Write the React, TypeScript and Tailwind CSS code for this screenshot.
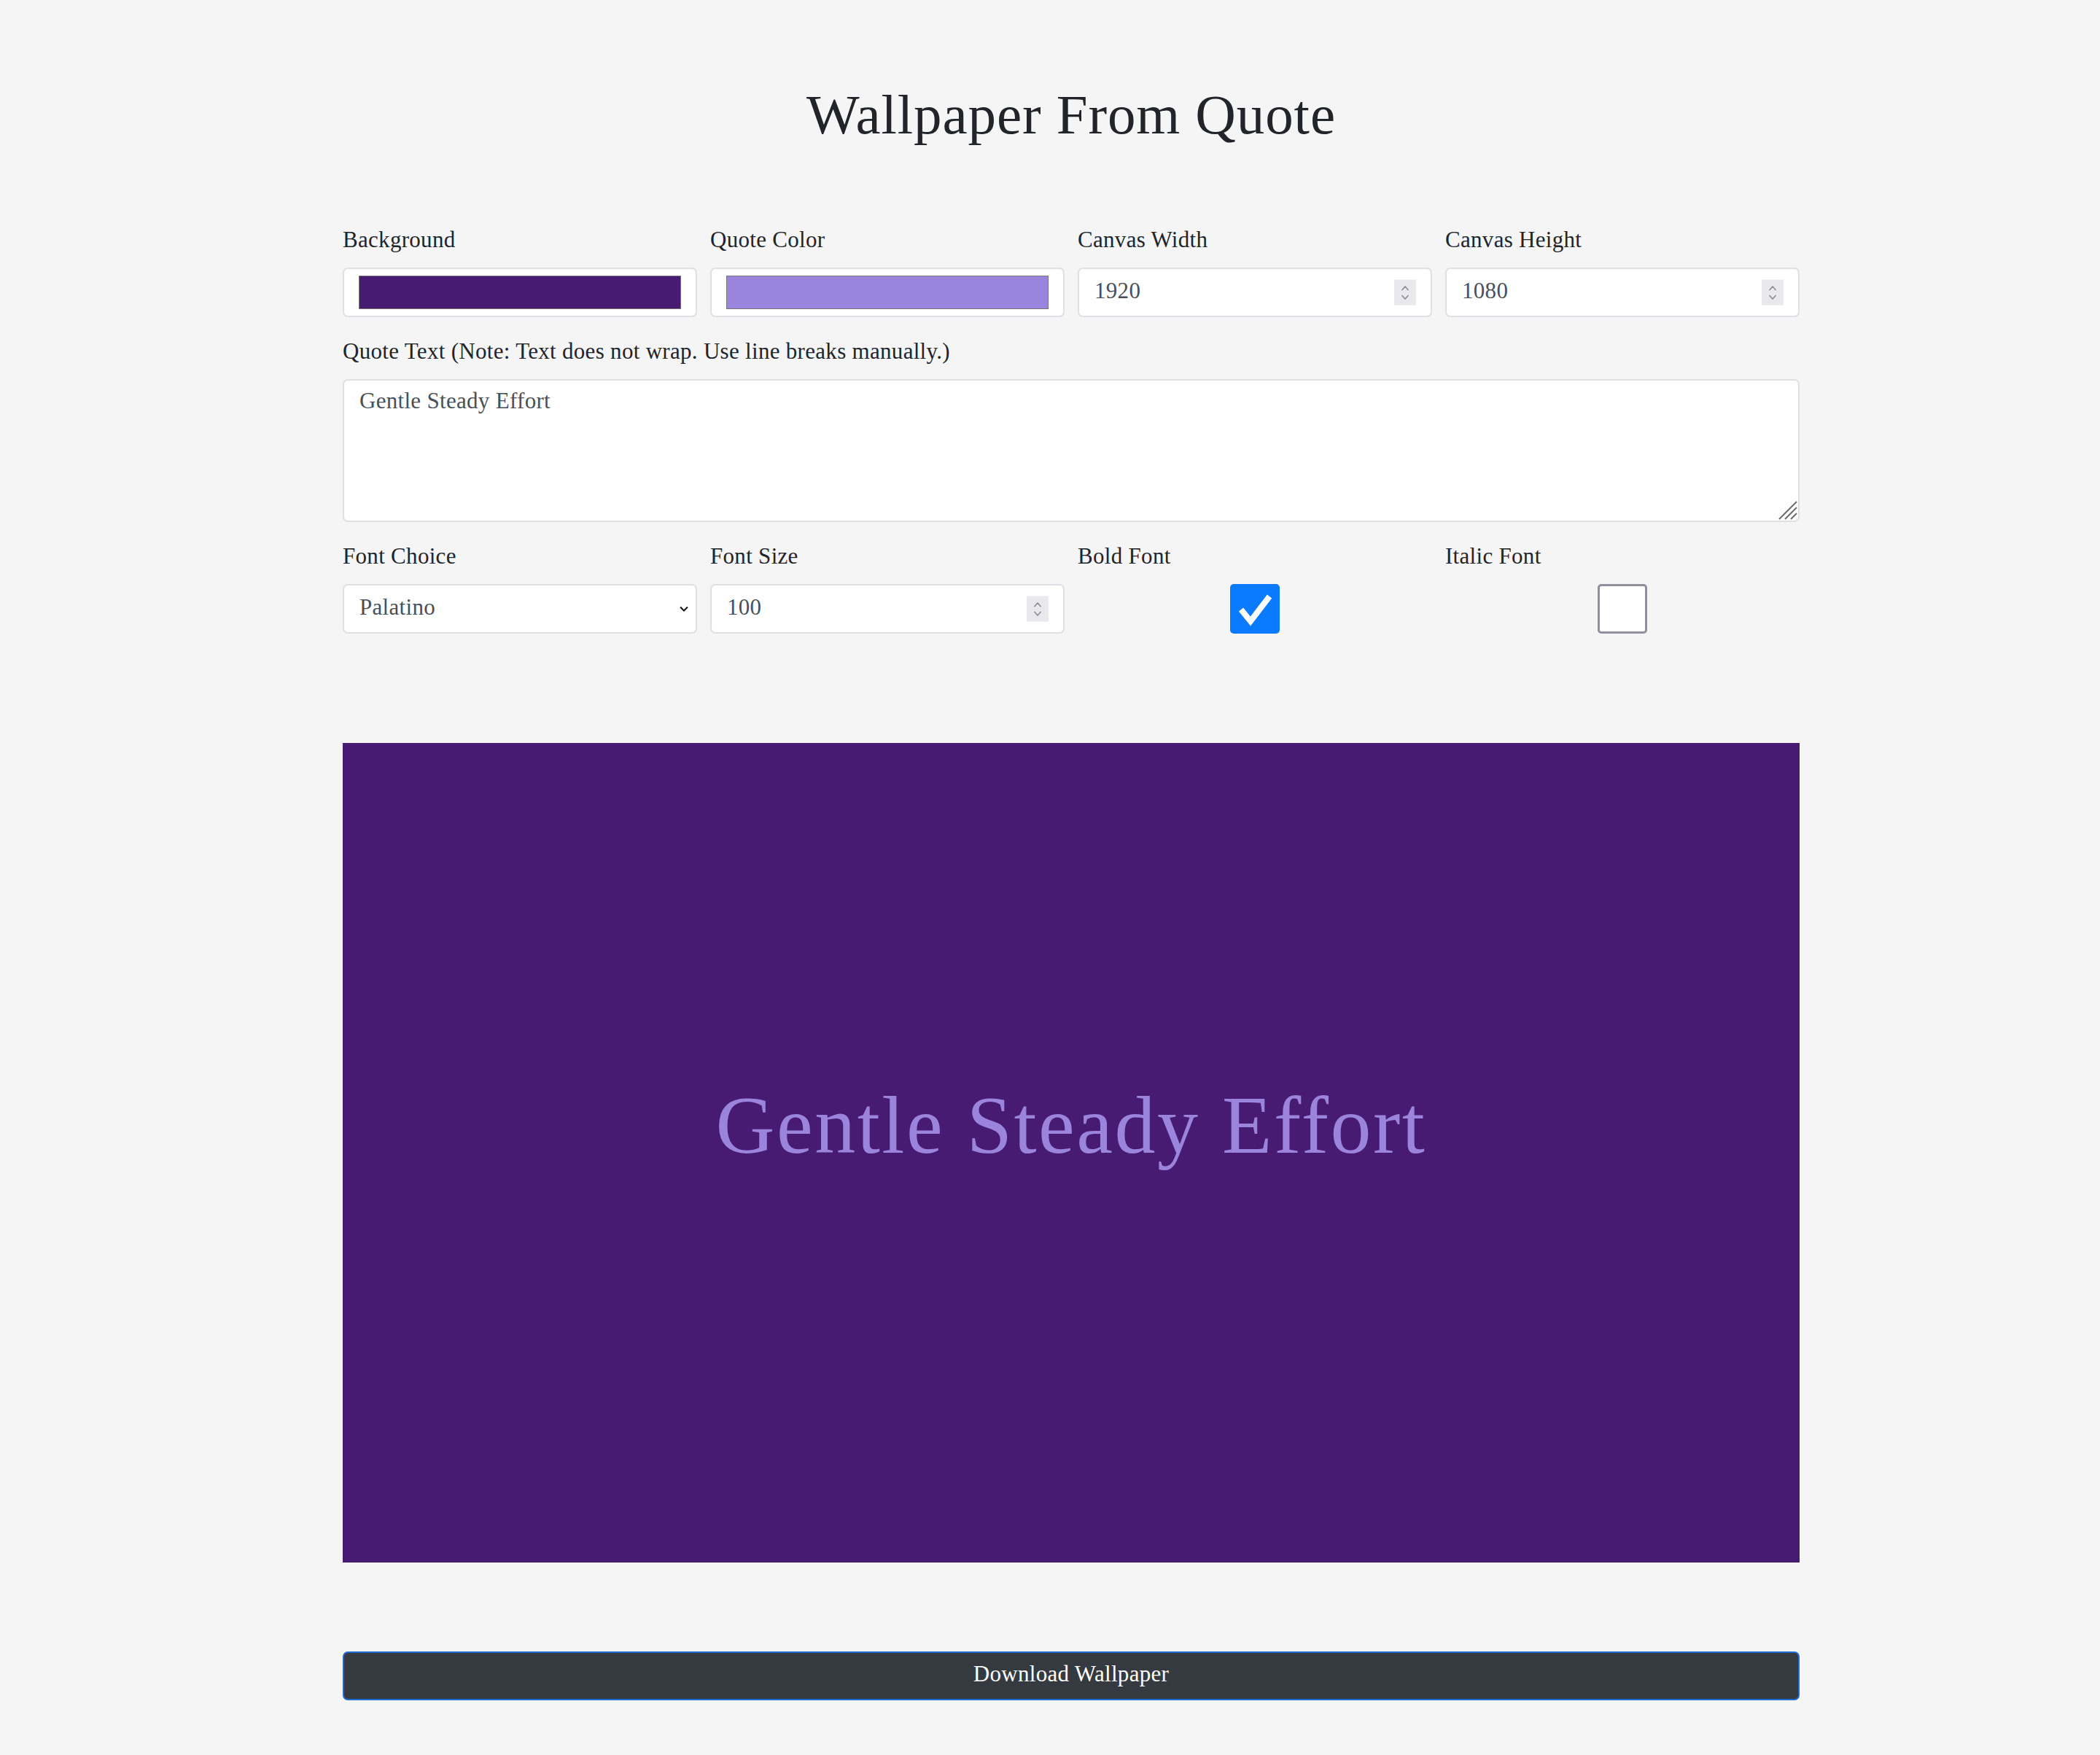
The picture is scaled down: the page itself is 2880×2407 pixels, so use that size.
import React from "react";

const labelCls =
  "block h-[43px] leading-[43px] mb-[17px] text-[31px] tracking-[0.3px] text-[#212529] whitespace-nowrap";
const boxCls =
  "h-[68px] w-full rounded-[7px] border-2 border-[#dde0e5] bg-white";
const inputText =
  "text-[31px] tracking-[0.3px] text-[#495057] font-['Liberation_Serif',serif]";

function Spinner() {
  return (
    <div className="pointer-events-none absolute right-[22px] top-1/2 flex h-[35px] w-[30px] -translate-y-1/2 items-center justify-center bg-[#e9e9ed]">
      <svg width="14" height="26" viewBox="0 0 14 26" fill="none" stroke="#8f8f9d" strokeWidth="1.8" strokeLinecap="round" strokeLinejoin="round">
        <path d="M3 9 L7 4.5 L11 9" />
        <path d="M3 17 L7 21.5 L11 17" />
      </svg>
    </div>
  );
}

function NumberField({ value }: { value: string }) {
  return (
    <div className="relative">
      <input
        type="text"
        readOnly
        value={value}
        className={`${boxCls} ${inputText} px-[21px] pb-[4px] outline-none`}
      />
      <Spinner />
    </div>
  );
}

function ColorField({ color }: { color: string }) {
  return (
    <div className={`${boxCls} flex items-center px-[20px]`}>
      <div className="h-[46px] w-full border border-[#767676]" style={{ backgroundColor: color }} />
    </div>
  );
}

export default function App() {
  return (
    <div className="min-h-screen bg-[#f5f5f5] pb-[75px] pl-[470px] font-['Liberation_Serif',serif]">
      <div className="w-[1998px]">
        <h1 className="pt-[114px] h-[201px] text-center text-[77px] leading-[86px] tracking-[0.9px] text-[#212529]">
          Wallpaper From Quote
        </h1>

        <div className="mt-[106px] grid grid-cols-4 gap-x-[18px]">
          <div>
            <label className={labelCls}>Background</label>
            <ColorField color="#481b73" />
          </div>
          <div>
            <label className={labelCls}>Quote Color</label>
            <ColorField color="#9b84dc" />
          </div>
          <div>
            <label className={labelCls}>Canvas Width</label>
            <NumberField value="1920" />
          </div>
          <div>
            <label className={labelCls}>Canvas Height</label>
            <NumberField value="1080" />
          </div>
        </div>

        <div className="mt-[25px]">
          <label className={labelCls}>Quote Text (Note: Text does not wrap. Use line breaks manually.)</label>
          <div className="relative">
            <textarea
              readOnly
              value="Gentle Steady Effort"
              className={`block h-[196px] w-full resize-none rounded-[7px] border-2 border-[#dde0e5] bg-white px-[21px] pt-[6px] pb-[9px] leading-[43px] outline-none ${inputText}`}
            />
            <svg
              className="pointer-events-none absolute bottom-[3px] right-[3px]"
              width="26"
              height="26"
              viewBox="0 0 26 26"
              fill="none"
              stroke="#6b6b6b"
              strokeWidth="2"
            >
              <path d="M25 1 L1 25" />
              <path d="M25 9 L9 25" />
              <path d="M25 17 L17 25" />
            </svg>
          </div>
        </div>

        <div className="mt-[25px] grid grid-cols-4 gap-x-[18px]">
          <div>
            <label className={labelCls}>Font Choice</label>
            <div className="relative">
              <select
                defaultValue="Palatino"
                className={`${boxCls} ${inputText} appearance-none px-[21px] pb-[4px] outline-none`}
              >
                <option>Palatino</option>
                <option>Georgia</option>
                <option>Arial</option>
              </select>
              <svg
                className="pointer-events-none absolute right-[11px] top-1/2 -translate-y-1/2"
                width="14"
                height="10"
                viewBox="0 0 14 10"
                fill="none"
                stroke="#111"
                strokeWidth="2"
              >
                <path d="M2 2.5 L7 7.5 L12 2.5" />
              </svg>
            </div>
          </div>
          <div>
            <label className={labelCls}>Font Size</label>
            <NumberField value="100" />
          </div>
          <div>
            <label className={labelCls}>Bold Font</label>
            <div className="flex h-[68px] justify-center">
              <div className="h-[68px] w-[68px] rounded-[5px] bg-[#0a7bff]">
                <svg width="68" height="68" viewBox="0 0 68 68" fill="none" stroke="#fff" strokeWidth="8" strokeLinejoin="miter">
                  <path d="M15 35 L28 51 L54 17" />
                </svg>
              </div>
            </div>
          </div>
          <div>
            <label className={labelCls}>Italic Font</label>
            <div className="flex h-[68px] justify-center">
              <div className="h-[68px] w-[68px] rounded-[5px] border-[3px] border-[#8f8f9d] bg-white" />
            </div>
          </div>
        </div>

        <div className="relative mt-[150px] h-[1124px] w-full bg-[#481b73]">
          <div className="absolute left-0 right-0 top-[468px] whitespace-nowrap text-center text-[112px] leading-none tracking-[2.5px] text-[#9b84dc]">
            Gentle Steady Effort
          </div>
        </div>

        <button className="mt-[122px] flex h-[67px] w-full items-center justify-center rounded-[7px] border-2 border-[#1f6bd0] bg-[#343a40] pb-[5px] text-[31px] tracking-[0.3px] text-white">
          Download Wallpaper
        </button>
      </div>
    </div>
  );
}
